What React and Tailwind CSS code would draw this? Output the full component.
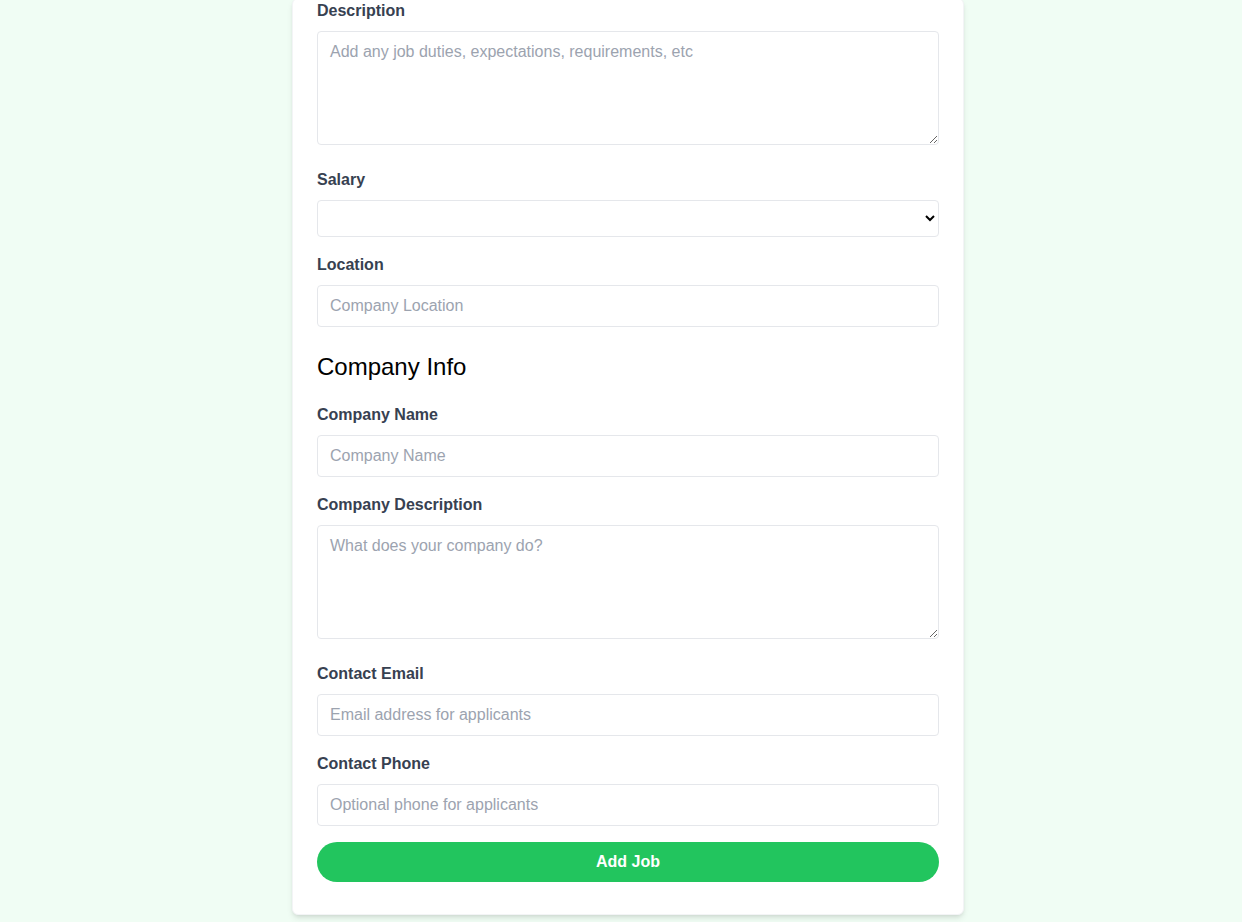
const inputClass =
  'border border-[#e5e7eb] rounded w-full py-2 px-3 text-base leading-6 text-[#374151] placeholder-[#9ca3af] focus:outline-none';

function Label({ children }) {
  return <label className="block text-[#374151] font-bold mb-2 leading-6">{children}</label>;
}

export default function App() {
  return (
    <div
      className="min-h-screen bg-[#f0fdf4] pb-8"
      style={{ fontFamily: '"Liberation Sans", Arial, sans-serif' }}
    >
      <div className="ml-[292px] w-[672px] -mt-[2px] bg-white border border-[#f3f4f6] rounded-md shadow-md px-6 pb-8">
        <form onSubmit={(e) => e.preventDefault()}>
          <div className="mb-4">
            <Label>Description</Label>
            <textarea
              className={inputClass}
              rows="4"
              placeholder="Add any job duties, expectations, requirements, etc"
            />
          </div>

          <div className="mb-4">
            <Label>Salary</Label>
            <select className="border border-[#e5e7eb] rounded w-full h-[37px] py-2 px-3 text-black bg-white" defaultValue="">
              <option value=""></option>
              <option value="Under $50K">Under $50K</option>
              <option value="$50K - 60K">$50K - 60K</option>
              <option value="$60K - 70K">$60K - 70K</option>
            </select>
          </div>

          <div className="mb-4">
            <Label>Location</Label>
            <input type="text" className={`${inputClass} mb-2`} placeholder="Company Location" />
          </div>

          <h3 className="text-2xl leading-8 text-black mb-5">Company Info</h3>

          <div className="mb-4">
            <Label>Company Name</Label>
            <input type="text" className={inputClass} placeholder="Company Name" />
          </div>

          <div className="mb-4">
            <Label>Company Description</Label>
            <textarea className={inputClass} rows="4" placeholder="What does your company do?" />
          </div>

          <div className="mb-4">
            <Label>Contact Email</Label>
            <input type="email" className={inputClass} placeholder="Email address for applicants" />
          </div>

          <div className="mb-4">
            <Label>Contact Phone</Label>
            <input type="tel" className={inputClass} placeholder="Optional phone for applicants" />
          </div>

          <div>
            <button
              type="submit"
              className="bg-[#22c55e] hover:bg-[#16a34a] text-white font-bold py-2 px-4 leading-6 rounded-full w-full focus:outline-none"
            >
              Add Job
            </button>
          </div>
        </form>
      </div>
    </div>
  );
}
